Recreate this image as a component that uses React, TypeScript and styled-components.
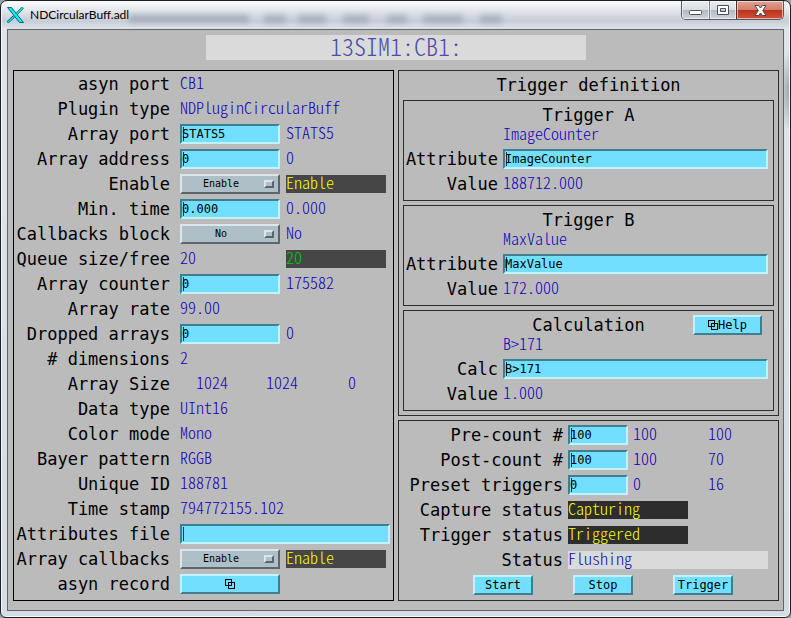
import React from "react";
import styled, { createGlobalStyle, css } from "styled-components";

const BLUE = "#0f00b9";
const labelFont = '"DejaVu Sans Mono", monospace';
const valueFont = '"Noto Sans CJK JP", monospace';

const Global = createGlobalStyle`
  *, *::before, *::after { box-sizing: border-box; }
  body { margin: 0; background: #9aa0a8; }
`;

const Window = styled.main`
  border: 1px solid #1d2024;
  border-radius: 7px 7px 6px 6px;
  padding: 0 6px 6px;
  box-shadow: inset 0 0 0 1px #f4f7fa;
  background:
    radial-gradient(ellipse 12px 40px at 100% 90px, #9aa2ae 0%, transparent 100%),
    linear-gradient(180deg, #fdfdfe 0, #e6e9ee 8px, #c6cdd8 20px, #dfe4ea 28px, #d6dce4 100%);
`;

const TitleBar = styled.header`
  position: relative;
  height: 28px;
  display: flex;
  align-items: flex-start;
  gap: 6px;
`;

const AppIcon = styled.svg`
  width: 17px;
  height: 16px;
  margin-top: 6px;
`;

const Caption = styled.h1`
  margin: 6px 0 0;
  flex: 1;
  font: 400 12px/16px Lato, "Open Sans", sans-serif;
  color: #000;
`;

const Streaks = styled.div`
  position: absolute;
  inset: 0;
  pointer-events: none;
  filter: blur(3px);
  background:
    linear-gradient(#7d8694, #7d8694) 122px 14px / 120px 7px no-repeat,
    linear-gradient(#8a93a1, #8a93a1) 257px 14px / 22px 8px no-repeat,
    linear-gradient(#8a93a1, #8a93a1) 291px 14px / 28px 8px no-repeat,
    linear-gradient(#8a93a1, #8a93a1) 336px 14px / 26px 8px no-repeat,
    linear-gradient(#8a93a1, #8a93a1) 380px 14px / 20px 8px no-repeat,
    linear-gradient(#8a93a1, #8a93a1) 416px 14px / 40px 8px no-repeat,
    linear-gradient(#8a93a1, #8a93a1) 473px 14px / 22px 8px no-repeat;
  opacity: 0.55;
`;

const Controls = styled.div`
  position: relative;
  display: flex;
  border: 1px solid #565c66;
  border-top: 0;
  border-radius: 0 0 5px 5px;
  overflow: hidden;
`;

const Control = styled.button<{ $close?: boolean }>`
  width: ${(p) => (p.$close ? 47 : 27)}px;
  height: 18px;
  padding: 0;
  border: 0;
  border-left: 1px solid ${(p) => (p.$close ? "#5c2a22" : "#7b828c")};
  display: grid;
  place-items: center;
  box-shadow: inset 0 0 0 1px rgba(255, 255, 255, 0.55);
  background: ${(p) =>
    p.$close
      ? "linear-gradient(#e2a394 0, #d27c68 9px, #b8311b 9px, #d0523a 18px)"
      : "linear-gradient(#eceef1 0, #d8dce1 9px, #b2b8c1 9px, #cfd5dc 18px)"};
  &:first-child { border-left: 0; }
  svg { display: block; }
`;

const Client = styled.div`
  border: 1px solid #60656b;
  background: #bbb;
  padding: 5px 4px 9px 5px;
`;

const Banner = styled.h2`
  max-width: 380px;
  height: 25px;
  margin: 0 auto 10px;
  background: #dadada;
  color: #4b4ba8;
  text-align: center;
  font: 300 24px/22px ${valueFont};
  font-feature-settings: "hwid", "liga" 0;
`;

const Columns = styled.div`
  display: grid;
  grid-template-columns: 1fr 1fr;
  gap: 4px;
`;

const Stack = styled.div`
  display: flex;
  flex-direction: column;
  gap: 4px;
`;

const Panel = styled.section<{ $pad: string; $black?: boolean }>`
  border: 1px solid ${(p) => (p.$black ? "#000" : "#2d2d2d")};
  padding: ${(p) => p.$pad};
  display: flex;
  flex-direction: column;
  gap: 5px;
`;

const Group = styled(Panel)`
  gap: 0;
`;

const Row = styled.div<{ $label: number; $gap: number }>`
  display: grid;
  grid-template-columns: ${(p) => p.$label}px 1fr;
  grid-template-rows: 20px;
  column-gap: ${(p) => p.$gap}px;
  align-items: center;
`;

const labelText = css`
  font: 400 17px/20px ${labelFont};
  color: #000;
  white-space: nowrap;
`;

const Label = styled.label`
  ${labelText}
  justify-self: end;
`;

const Heading = styled.h3<{ $tall?: boolean }>`
  ${labelText}
  margin: 0;
  text-align: center;
  line-height: ${(p) => (p.$tall ? 29 : 20)}px;
`;

const HeadRow = styled.div`
  display: grid;
  grid-template-columns: 1fr auto 1fr;
  height: 20px;
  margin-right: -5px;
`;

const Fields = styled.div<{ $gap: number }>`
  display: flex;
  align-items: center;
  gap: ${(p) => p.$gap}px;
`;

const Value = styled.output<{ $w?: number; $center?: boolean }>`
  display: block;
  font: 300 16px/14px ${valueFont};
  font-feature-settings: "hwid", "liga" 0;
  color: ${BLUE};
  white-space: pre;
  height: 18px;
  width: ${(p) => (p.$w ? p.$w + "px" : "auto")};
  text-align: ${(p) => (p.$center ? "center" : "left")};
`;

const Status = styled(Value)<{ $bg: string; $fg: string }>`
  background: ${(p) => p.$bg};
  color: ${(p) => p.$fg};
`;

const Entry = styled.input<{ $w?: number }>`
  ${(p) => (p.$w ? `width: ${p.$w}px;` : "flex: 1; min-width: 0;")}
  height: 20px;
  margin: 0;
  padding: 0;
  border: 2px solid;
  border-color: #3f7d8f #bff3ff #bff3ff #3f7d8f;
  border-radius: 0;
  outline: 0;
  background: linear-gradient(#16353d, #16353d) 1px 1px / 1px 14px no-repeat #73dfff;
  font: 400 12px/14px ${labelFont};
  color: #000;
`;

const MenuBox = styled.span`
  position: relative;
  display: block;
  width: 100px;
  height: 20px;
  &::after {
    content: "";
    position: absolute;
    right: 6px;
    top: 6px;
    width: 10px;
    height: 8px;
    border: 2px solid;
    border-color: #dae6ea #5b666c #5b666c #dae6ea;
    background: #aebfc8;
    pointer-events: none;
  }
`;

const Menu = styled.select`
  display: block;
  appearance: none;
  width: 100%;
  height: 20px;
  margin: 0;
  padding: 0 18px 0 0;
  border: 2px solid;
  border-color: #dae6ea #5b666c #5b666c #dae6ea;
  border-radius: 0;
  background: #aebfc8;
  font: 400 10px/14px ${labelFont};
  color: #000;
  text-align: center;
  text-align-last: center;
`;

const Push = styled.button<{ $w: number }>`
  width: ${(p) => p.$w}px;
  height: 20px;
  padding: 0;
  display: flex;
  align-items: center;
  justify-content: center;
  border: 2px solid;
  border-color: #bff3ff #3f7d8f #3f7d8f #bff3ff;
  background: #73dfff;
  font: 400 12px/16px ${labelFont};
  color: #000;
`;

const HelpSlot = styled.div`
  justify-self: end;
  margin-right: 11px;
`;

const Triple = styled.div`
  display: grid;
  grid-template-columns: 60px 70px 1fr;
  column-gap: 5px;
  align-items: center;
`;

const Actions = styled.div`
  display: flex;
  gap: 40px;
  padding-left: 74px;
`;

const Spacer = styled.div<{ $h: number }>`
  height: ${(p) => p.$h}px;
`;

const WindowsGlyph = () => (
  <svg width="10" height="10" viewBox="0 0 10 10" fill="none" stroke="#000" shapeRendering="crispEdges" aria-hidden>
    <rect x="0.5" y="0.5" width="6" height="6" />
    <path d="M6.5 3.5h3v6h-6v-6h3" />
  </svg>
);

type Item = {
  label: string;
  input?: string;
  menu?: string;
  value?: string;
  status?: [string, string];
  wide?: boolean;
};

const YELLOW = "#ffff00";

const items: Item[] = [
  { label: "asyn port", value: "CB1" },
  { label: "Plugin type", value: "NDPluginCircularBuff" },
  { label: "Array port", input: "STATS5", value: "STATS5" },
  { label: "Array address", input: "0", value: "0" },
  { label: "Enable", menu: "Enable", status: ["Enable", YELLOW] },
  { label: "Min. time", input: "0.000", value: "0.000" },
  { label: "Callbacks block", menu: "No", value: "No" },
  { label: "Queue size/free", value: "20", status: ["20", "#00cd00"] },
  { label: "Array counter", input: "0", value: "175582" },
  { label: "Array rate", value: "99.00" },
  { label: "Dropped arrays", input: "0", value: "0" },
  { label: "# dimensions", value: "2" },
];

const tail: Item[] = [
  { label: "Data type", value: "UInt16" },
  { label: "Color mode", value: "Mono" },
  { label: "Bayer pattern", value: "RGGB" },
  { label: "Unique ID", value: "188781" },
  { label: "Time stamp", value: "794772155.102" },
  { label: "Attributes file", input: "", wide: true },
  { label: "Array callbacks", menu: "Enable", status: ["Enable", YELLOW] },
];

const idOf = (s: string) => s.toLowerCase().replace(/[^a-z]+/g, "-");

const LeftRow = ({ item }: { item: Item }) => {
  const id = idOf(item.label);
  return (
    <Row $label={156} $gap={10}>
      <Label htmlFor={id}>{item.label}</Label>
      <Fields $gap={6}>
        {item.input !== undefined && <Entry id={id} $w={item.wide ? undefined : 100} defaultValue={item.input} />}
        {item.menu && (
          <MenuBox>
            <Menu id={id} defaultValue={item.menu}>
              {(item.menu === "No" ? ["No", "Yes"] : ["Enable", "Disable"]).map((o) => (
                <option key={o}>{o}</option>
              ))}
            </Menu>
          </MenuBox>
        )}
        {item.value && (
          <Value id={item.input === undefined && !item.menu ? id : undefined} $w={item.status ? 100 : undefined}>
            {item.value}
          </Value>
        )}
        {item.status && (
          <Status $w={100} $bg="#464646" $fg={item.status[1]}>
            {item.status[0]}
          </Status>
        )}
      </Fields>
    </Row>
  );
};

type TriggerProps = { title: string; name: string; field: string; entry: string; value: string; help?: boolean };

const TriggerPanel = ({ title, name, field, entry, value, help }: TriggerProps) => {
  const id = idOf(title + " " + field);
  return (
    <Group $pad="4px 5px 6px 0">
      <HeadRow>
        <span />
        <Heading>{title}</Heading>
        {help && (
          <HelpSlot>
            <Push $w={69}>
              <WindowsGlyph />
              Help
            </Push>
          </HelpSlot>
        )}
      </HeadRow>
      <Row $label={94} $gap={5}>
        <span />
        <Value>{name}</Value>
      </Row>
      <Spacer $h={4} />
      <Row $label={94} $gap={5}>
        <Label htmlFor={id}>{field}</Label>
        <Fields $gap={0}>
          <Entry id={id} defaultValue={entry} />
        </Fields>
      </Row>
      <Spacer $h={5} />
      <Row $label={94} $gap={5}>
        <Label htmlFor={id + "-value"}>Value</Label>
        <Value id={id + "-value"}>{value}</Value>
      </Row>
    </Group>
  );
};

const counts = [
  ["Pre-count #", "100", "100", "100"],
  ["Post-count #", "100", "100", "70"],
  ["Preset triggers", "0", "0", "16"],
];

const states: [string, string, number, string, string][] = [
  ["Capture status", "Capturing", 120, "#2d2d2d", YELLOW],
  ["Trigger status", "Triggered", 120, "#2d2d2d", YELLOW],
  ["Status", "Flushing", 200, "#dadada", BLUE],
];

export default function App() {
  return (
    <>
      <Global />
      <Window>
        <TitleBar>
          <Streaks />
          <AppIcon viewBox="0 0 17 16" aria-hidden>
            <path d="M0.500 0.500h4l12 15h-4z" fill="#00f0f5" stroke="#0b3c46" strokeWidth="0.8" />
            <path d="M16 0.500L9.500 7M7 9.500L0.500 15.500" stroke="#0b3c46" strokeWidth="2.400" />
            <path d="M16 0.500L9.500 7M7 9.500L0.500 15.500" stroke="#00f0f5" strokeWidth="1.200" />
          </AppIcon>
          <Caption>NDCircularBuff.adl</Caption>
          <Controls>
            <Control aria-label="Minimize">
              <svg width="13" height="12" viewBox="0 0 13 12">
                <rect x="0.500" y="6.500" width="12" height="4" rx="1" fill="#fff" stroke="#4a505c" />
              </svg>
            </Control>
            <Control aria-label="Maximize">
              <svg width="12" height="10" viewBox="0 0 12 10">
                <path d="M0.500 0.500h11v9h-11zM3.500 3.500v3h5v-3z" fill="#fff" fillRule="evenodd" stroke="#4a505c" />
              </svg>
            </Control>
            <Control aria-label="Close" $close>
              <svg width="13" height="11" viewBox="0 0 13 11">
                <path
                  d="M1 0.500h3.500l2 2.500 2-2.500H12L8.700 5.500 12 10.500H8.500l-2-2.500-2 2.500H1l3.300-5z"
                  fill="#fff"
                  stroke="#4a4350"
                />
              </svg>
            </Control>
          </Controls>
        </TitleBar>
        <Client>
          <Banner>13SIM1:CB1:</Banner>
          <Columns>
            <Panel $black $pad="3px 3px 6px 0">
              {items.map((item) => (
                <LeftRow key={item.label} item={item} />
              ))}
              <Row $label={156} $gap={10}>
                <Label htmlFor="size-x">Array Size</Label>
                <Fields $gap={6}>
                  <Value id="size-x" $w={64} $center>1024</Value>
                  <Value $w={64} $center>1024</Value>
                  <Value $w={64} $center>0</Value>
                </Fields>
              </Row>
              {tail.map((item) => (
                <LeftRow key={item.label} item={item} />
              ))}
              <Row $label={156} $gap={10}>
                <Label htmlFor="asyn-record">asyn record</Label>
                <Push id="asyn-record" $w={100}>
                  <WindowsGlyph />
                </Push>
              </Row>
            </Panel>
            <Stack>
              <Group $pad="0 4px 4px">
                <Heading $tall>Trigger definition</Heading>
                <Stack>
                  <TriggerPanel title="Trigger A" name="ImageCounter" field="Attribute" entry="ImageCounter" value="188712.000" />
                  <TriggerPanel title="Trigger B" name="MaxValue" field="Attribute" entry="MaxValue" value="172.000" />
                  <TriggerPanel title="Calculation" name="B>171" field="Calc" entry="B>171" value="1.000" help />
                </Stack>
              </Group>
              <Panel $pad="4px 0 5px">
                {counts.map(([label, entry, a, b]) => (
                  <Row key={label} $label={164} $gap={5}>
                    <Label htmlFor={idOf(label)}>{label}</Label>
                    <Triple>
                      <Entry id={idOf(label)} $w={60} defaultValue={entry} />
                      <Value>{a}</Value>
                      <Value>{b}</Value>
                    </Triple>
                  </Row>
                ))}
                {states.map(([label, text, w, bg, fg]) => (
                  <Row key={label} $label={164} $gap={5}>
                    <Label htmlFor={idOf(label)}>{label}</Label>
                    <Status id={idOf(label)} $w={w} $bg={bg} $fg={fg}>
                      {text}
                    </Status>
                  </Row>
                ))}
                <Actions>
                  <Push $w={60}>Start</Push>
                  <Push $w={60}>Stop</Push>
                  <Push $w={60}>Trigger</Push>
                </Actions>
              </Panel>
            </Stack>
          </Columns>
        </Client>
      </Window>
    </>
  );
}
